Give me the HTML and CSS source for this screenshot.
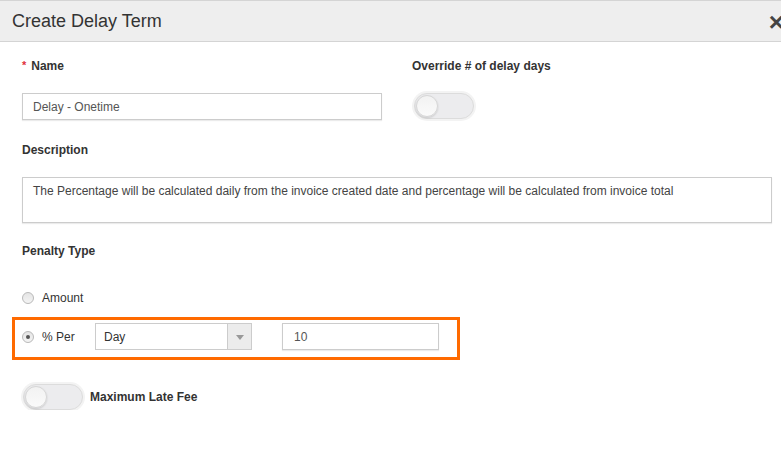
FILE: index.html
```html
<!DOCTYPE html>
<html>
<head>
<meta charset="utf-8">
<link rel="stylesheet" href="styles.css">
</head>
<body>
<div class="modal">
  <div class="modal-header">
    <span class="modal-title">Create Delay Term</span>
    <span class="modal-close">&times;</span>
  </div>
  <div class="modal-body">
    <div class="row-two">
      <div class="col-left">
        <div class="label"><span class="req">*</span>Name</div>
        <div class="text-input name-input">Delay - Onetime</div>
      </div>
      <div class="col-right">
        <div class="label">Override # of delay days</div>
        <div class="toggle"><span class="knob"></span></div>
      </div>
    </div>
    <div class="label desc-label">Description</div>
    <div class="textarea">The Percentage will be calculated daily from the invoice created date and percentage will be calculated from invoice total</div>
    <div class="label penalty-label">Penalty Type</div>
    <div class="radio-row amount-row"><span class="radio"></span><span class="radio-text">Amount</span></div>
    <div class="highlight">
      <div class="radio-row"><span class="radio checked"></span><span class="radio-text">% Per</span></div>
      <div class="select"><span class="select-value">Day</span><span class="select-arrow"><span class="tri"></span></span></div>
      <div class="text-input value-input">10</div>
    </div>
    <div class="max-row">
      <div class="toggle"><span class="knob"></span></div>
      <span class="label max-label">Maximum Late Fee</span>
    </div>
  </div>
</div>
</body>
</html>
```

FILE: styles.css
```css
html, body {
  margin: 0;
  padding: 0;
  background: #fff;
  overflow: hidden;
  font-family: "Liberation Sans", Arial, sans-serif;
}
.modal {
  width: 792px;
}
.modal-header {
  height: 40px;
  background: #eeeeee;
  border-top: 1px solid #d4d4d4;
  border-bottom: 1px solid #d4d4d4;
  display: flex;
  align-items: center;
  justify-content: space-between;
  padding: 0 8px 0 12px;
}
.modal-title {
  font-size: 18px;
  color: #333;
}
.modal-close {
  font-size: 26px;
  font-weight: bold;
  color: #444;
  line-height: 1;
  margin-top: 2px;
}
.modal-body {
  padding: 16px 20px 0 22px;
}
.row-two {
  display: flex;
}
.col-left {
  width: 360px;
  margin-right: 30px;
}
.label {
  font-size: 12px;
  font-weight: bold;
  color: #333;
  line-height: 16px;
}
.req {
  color: #e0303a;
  font-size: 11px;
  margin-right: 5px;
  position: relative;
  top: -1px;
}
.text-input {
  box-sizing: border-box;
  border: 1px solid #ccc;
  box-shadow: 0 1px 1px rgba(0,0,0,0.08);
  font-size: 12px;
  color: #555;
  display: flex;
  align-items: center;
}
.name-input {
  margin-top: 19px;
  height: 27px;
  padding-left: 10px;
}
.toggle {
  box-sizing: border-box;
  width: 60px;
  height: 26px;
  border-radius: 13px;
  background: #ececee;
  border: 1px solid #dcdcdc;
  box-shadow: 0 0 0 2px #f3f3f3;
  position: relative;
}
.col-right .toggle {
  margin-top: 19px;
  margin-left: 2px;
}
.knob {
  position: absolute;
  left: 1px;
  top: 1px;
  width: 20px;
  height: 20px;
  border-radius: 50%;
  background: linear-gradient(#f2f2f2, #fafafa);
  border: 1px solid #d6d6d6;
  box-shadow: 0 1px 2px rgba(0,0,0,0.15);
}
.desc-label {
  margin-top: 22px;
}
.textarea {
  box-sizing: border-box;
  margin-top: 19px;
  height: 46px;
  border: 1px solid #ccc;
  box-shadow: 0 1px 1px rgba(0,0,0,0.08);
  font-size: 12px;
  color: #444;
  padding: 6px 10px;
  line-height: 14px;
}
.penalty-label {
  margin-top: 20px;
}
.radio-row {
  display: flex;
  align-items: center;
  height: 16px;
}
.amount-row {
  margin-top: 31px;
}
.radio {
  box-sizing: border-box;
  width: 12px;
  height: 12px;
  border-radius: 50%;
  border: 1px solid #b9b9b9;
  background: linear-gradient(#e4e4e4, #f4f4f4);
  display: flex;
  align-items: center;
  justify-content: center;
}
.radio.checked::after {
  content: "";
  width: 4px;
  height: 4px;
  border-radius: 50%;
  background: #555;
}
.radio-text {
  font-size: 12px;
  color: #333;
  margin-left: 8px;
}
.highlight {
  margin: 11px 0 0 -10px;
  box-sizing: border-box;
  width: 448px;
  height: 43px;
  border: 3px solid #ff6a00;
  display: flex;
  align-items: flex-start;
  padding: 3px 0 0 7px;
}
.highlight .radio-row {
  width: 73px;
  margin-top: 6px;
}
.select {
  box-sizing: border-box;
  width: 157px;
  height: 27px;
  border: 1px solid #ccc;
  display: flex;
  font-size: 12px;
  color: #333;
}
.select-value {
  flex: 1;
  display: flex;
  align-items: center;
  padding-left: 8px;
}
.select-arrow {
  width: 23px;
  background: #ececec;
  border-left: 1px solid #ccc;
  display: flex;
  align-items: center;
  justify-content: center;
}
.tri {
  width: 0;
  height: 0;
  border-left: 4px solid transparent;
  border-right: 4px solid transparent;
  border-top: 5px solid #999;
  margin-top: 1px;
}
.value-input {
  width: 157px;
  height: 27px;
  margin-left: 30px;
  padding-left: 11px;
}
.max-row {
  margin-top: 24px;
  display: flex;
  align-items: center;
}
.max-row .toggle {
  margin-left: 1px;
}
.max-label {
  margin-left: 7px;
}
```
